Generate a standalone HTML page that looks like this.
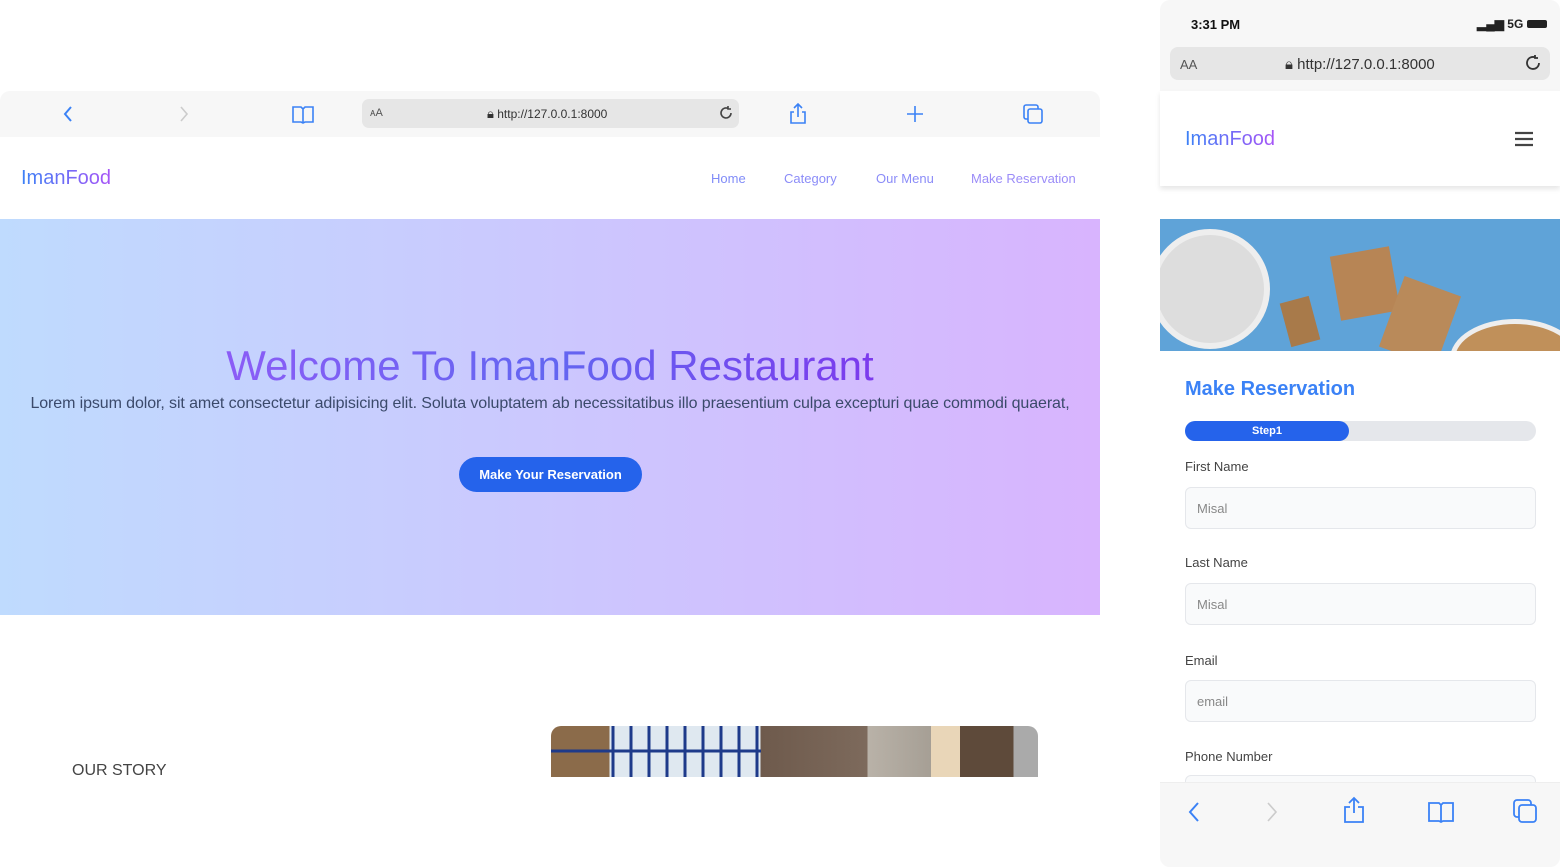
<!DOCTYPE html>
<html><head><style>
*{margin:0;padding:0;box-sizing:border-box}
body{width:1560px;height:867px;background:#fff;position:relative;overflow:hidden;font-family:"Liberation Sans",sans-serif}
.a{position:absolute}
.grad{background:linear-gradient(90deg,#3b82f6,#a855f7);-webkit-background-clip:text;color:transparent}
</style></head><body>
<!-- desktop -->
<div class="a" style="left:0;top:91px;width:1100px;height:46px;background:#f7f7f7;border-radius:10px 10px 0 0"></div>
<svg class="a" style="left:60px;top:104px" width="16" height="20"><path d="M11 3L5 10l6 7" stroke="#3b82f6" stroke-width="2" fill="none"/></svg>
<svg class="a" style="left:176px;top:104px" width="16" height="20"><path d="M5 3l6 7-6 7" stroke="#ccc" stroke-width="1.6" fill="none"/></svg>
<svg class="a" style="left:291px;top:104px" width="24" height="20"><path d="M2 3h8l2 2 2-2h8v15h-8l-2 1-2-1H2z M12 5v14" stroke="#3b82f6" stroke-width="1.6" fill="none"/></svg>
<div class="a" style="left:362px;top:99px;width:377px;height:29px;background:#e6e6e6;border-radius:7px"></div>
<div class="a" style="left:370px;top:107px;font-size:11px;color:#555">ᴀA</div>
<div class="a" style="left:487px;top:106px;font-size:13px;color:#333">🔒︎<span style="font-size:12px"> http://127.0.0.1:8000</span></div>
<svg class="a" style="left:717px;top:104px" width="18" height="18"><path d="M14 9a5 5 0 1 1-3-4.6M11 2v3h3" stroke="#444" stroke-width="1.6" fill="none"/></svg>
<svg class="a" style="left:789px;top:102px" width="18" height="24"><path d="M9 2v13M5 6l4-4 4 4M5 10H2v11h14V10h-3" stroke="#3b82f6" stroke-width="1.6" fill="none"/></svg>
<svg class="a" style="left:905px;top:104px" width="20" height="20"><path d="M10 2v16M2 10h16" stroke="#3b82f6" stroke-width="1.6"/></svg>
<svg class="a" style="left:1022px;top:103px" width="22" height="22"><rect x="2" y="2" width="14" height="14" rx="2" stroke="#3b82f6" stroke-width="1.6" fill="none"/><rect x="6" y="6" width="14" height="14" rx="2" stroke="#3b82f6" stroke-width="1.6" fill="#f7f7f7"/></svg>
<div class="a grad" style="left:21px;top:167px;font-size:20px">ImanFood</div>
<div class="a" style="left:711px;top:171px;font-size:13px;color:#818cf8">Home</div>
<div class="a" style="left:784px;top:171px;font-size:13px;color:#8b8cf8">Category</div>
<div class="a" style="left:876px;top:171px;font-size:13px;color:#8b8cf8">Our Menu</div>
<div class="a" style="left:971px;top:171px;font-size:13px;color:#9b8cf8">Make Reservation</div>
<div class="a" style="left:0;top:219px;width:1100px;height:396px;background:linear-gradient(90deg,#bfdbfe,#d8b4fe)"></div>
<div class="a" style="left:0;top:342px;width:1100px;text-align:center;font-size:42px"><span class="grad" style="background:linear-gradient(90deg,#8b5cf6,#6366f1,#7c3aed);-webkit-background-clip:text">Welcome To ImanFood Restaurant</span></div>
<div class="a" style="left:0;top:395px;width:1100px;text-align:center;font-size:16px;color:#3b4a6b;letter-spacing:-0.1px">Lorem ipsum dolor, sit amet consectetur adipisicing elit. Soluta voluptatem ab necessitatibus illo praesentium culpa excepturi quae commodi quaerat,</div>
<div class="a" style="left:459px;top:457px;width:183px;height:35px;background:#2563eb;border-radius:18px;color:#fff;font-size:13px;font-weight:bold;text-align:center;line-height:35px">Make Your Reservation</div>
<div class="a" style="left:72px;top:762px;font-size:16px;color:#444">OUR STORY</div>
<div class="a" style="left:551px;top:726px;width:487px;height:51px;border-radius:10px 10px 0 0;overflow:hidden;background:linear-gradient(90deg,#8b6b4a 0,#8b6b4a 12%,#dfe8f0 12%,#dfe8f0 43%,#6e5a4c 43%,#7d6a5c 65%,#b9b2a8 65%,#a69f95 78%,#e9d6b8 78%,#e9d6b8 84%,#5e4a3a 84%,#5e4a3a 95%,#aaa 95%)">
<svg width="487" height="51" class="a" style="left:0;top:0"><g stroke="#1e3a8a" stroke-width="3"><path d="M62 0v51M80 0v51M98 0v51M116 0v51M134 0v51M152 0v51M170 0v51M188 0v51M206 0v51M0 25h210"/></g></svg></div>
<!-- phone -->
<div class="a" style="left:1160px;top:0;width:400px;height:867px;background:#f7f7f7;border-radius:10px"></div>
<div class="a" style="left:1191px;top:17px;font-size:13px;font-weight:bold;color:#111">3:31 PM</div>
<div class="a" style="left:1477px;top:17px;font-size:12px;font-weight:bold;color:#222">▂▄▆ 5G <span style="display:inline-block;width:20px;height:8px;background:#222;border-radius:2px"></span></div>
<div class="a" style="left:1170px;top:47px;width:380px;height:33px;background:#e6e6e6;border-radius:8px"></div>
<div class="a" style="left:1180px;top:57px;font-size:13px;color:#555">AA</div>
<div class="a" style="left:1285px;top:56px;font-size:15px;color:#333">🔒︎ http://127.0.0.1:8000</div>
<svg class="a" style="left:1523px;top:53px" width="20" height="20"><path d="M16 10a6 6 0 1 1-3.5-5.5M12 2v3h3" stroke="#333" stroke-width="1.8" fill="none"/></svg>
<div class="a" style="left:1160px;top:186px;width:400px;height:600px;background:#fff"></div>
<div class="a" style="left:1160px;top:91px;width:400px;height:95px;background:#fff;box-shadow:0 3px 5px rgba(0,0,0,.1)"></div>
<div class="a grad" style="left:1185px;top:128px;font-size:20px">ImanFood</div>
<svg class="a" style="left:1514px;top:130px" width="20" height="18"><path d="M1 3h18M1 9h18M1 15h18" stroke="#444" stroke-width="2.2"/></svg>
<div class="a" style="left:1160px;top:219px;width:400px;height:132px;background:#5fa3d8;overflow:hidden">
<div class="a" style="left:-10px;top:10px;width:120px;height:120px;border-radius:50%;background:#ddd;border:6px solid #eee"></div>
<div class="a" style="left:175px;top:32px;width:60px;height:65px;background:#b78555;transform:rotate(-10deg)"></div>
<div class="a" style="left:230px;top:65px;width:60px;height:75px;background:#b98a5a;transform:rotate(20deg)"></div>
<div class="a" style="left:125px;top:80px;width:30px;height:45px;background:#a87a4a;transform:rotate(-15deg)"></div>
<div class="a" style="left:290px;top:100px;width:130px;height:80px;border-radius:50%;background:#c0905a;border:5px solid #eee"></div>
</div>
<div class="a" style="left:1185px;top:378px;font-size:20px;font-weight:bold;color:#3b82f6">Make Reservation</div>
<div class="a" style="left:1185px;top:421px;width:351px;height:20px;background:#e5e7eb;border-radius:10px"></div>
<div class="a" style="left:1185px;top:421px;width:164px;height:20px;background:#2563eb;border-radius:10px;color:#fff;font-size:11px;font-weight:bold;text-align:center;line-height:20px">Step1</div>
<div class="a" style="left:1185px;top:459px;font-size:13px;color:#444">First Name</div>
<div class="a" style="left:1185px;top:487px;width:351px;height:42px;background:#f9fafb;border:1px solid #e5e7eb;border-radius:6px;font-size:13px;color:#888;padding:13px 11px">Misal</div>
<div class="a" style="left:1185px;top:555px;font-size:13px;color:#444">Last Name</div>
<div class="a" style="left:1185px;top:583px;width:351px;height:42px;background:#f9fafb;border:1px solid #e5e7eb;border-radius:6px;font-size:13px;color:#888;padding:13px 11px">Misal</div>
<div class="a" style="left:1185px;top:653px;font-size:13px;color:#444">Email</div>
<div class="a" style="left:1185px;top:680px;width:351px;height:42px;background:#f9fafb;border:1px solid #e5e7eb;border-radius:6px;font-size:13px;color:#888;padding:13px 11px">email</div>
<div class="a" style="left:1185px;top:749px;font-size:13px;color:#444">Phone Number</div>
<div class="a" style="left:1185px;top:775px;width:351px;height:20px;background:#f9fafb;border:1px solid #e5e7eb;border-radius:6px"></div>
<div class="a" style="left:1160px;top:782px;width:400px;height:85px;background:#f7f7f7;border-top:1px solid #eee;border-radius:0 0 10px 10px"></div>
<svg class="a" style="left:1185px;top:800px" width="18" height="24"><path d="M13 3L5 12l8 9" stroke="#3b82f6" stroke-width="2" fill="none"/></svg>
<svg class="a" style="left:1263px;top:800px" width="18" height="24"><path d="M5 3l8 9-8 9" stroke="#ccc" stroke-width="1.6" fill="none"/></svg>
<svg class="a" style="left:1342px;top:796px" width="24" height="28"><path d="M12 2v15M7 7l5-5 5 5M8 11H3v15h18V11h-5" stroke="#3b82f6" stroke-width="1.8" fill="none"/></svg>
<svg class="a" style="left:1427px;top:799px" width="28" height="24"><path d="M2 4h10l2 2 2-2h10v18H16l-2 1-2-1H2z M14 6v16" stroke="#3b82f6" stroke-width="1.8" fill="none"/></svg>
<svg class="a" style="left:1512px;top:798px" width="26" height="26"><rect x="2" y="2" width="17" height="17" rx="3" stroke="#3b82f6" stroke-width="1.8" fill="none"/><rect x="7" y="7" width="17" height="17" rx="3" stroke="#3b82f6" stroke-width="1.8" fill="#f7f7f7"/></svg>
</body></html>
